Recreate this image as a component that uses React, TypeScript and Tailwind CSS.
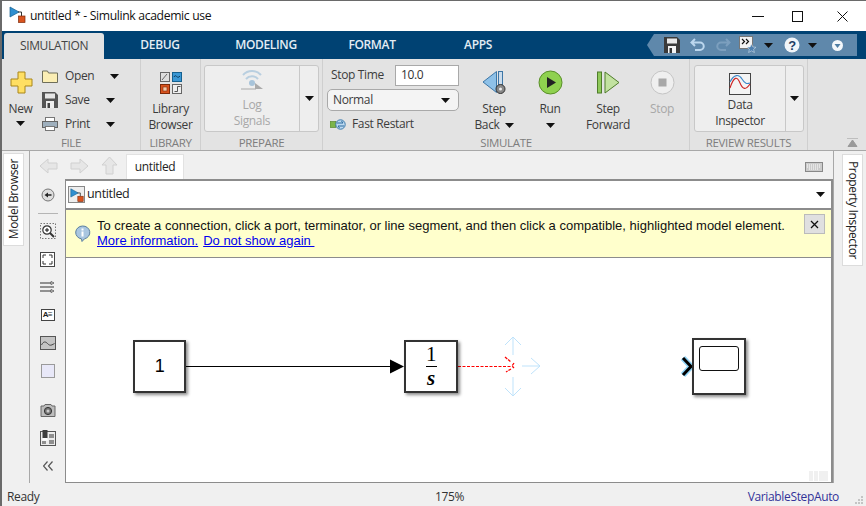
import type { ReactNode } from "react";

function Caret({ className = "" }: { className?: string }) {
  return (
    <svg width="9" height="5" viewBox="0 0 9 5" className={className}>
      <path d="M0 0h9L4.5 5z" fill="#111" />
    </svg>
  );
}

function ModelIcon({ size = 17 }: { size?: number }) {
  return (
    <svg width={size} height={size} viewBox="0 0 17 17">
      <path d="M1 1l9 5-9 5z" fill="#2f8fd0" stroke="#14608f" strokeWidth=".7" />
      <path d="M9 6h3.5v4" fill="none" stroke="#333" />
      <rect x="9.5" y="10" width="6.5" height="6.5" fill="#d9531e" stroke="#7c2a0a" strokeWidth=".7" />
    </svg>
  );
}

function QuickIcons() {
  return (
    <div className="flex items-center h-[22px] w-[210px] bg-[#5f88ab] [clip-path:polygon(0_50%,7px_0,100%_0,100%_100%,7px_100%)]">
      <svg width="16" height="16" viewBox="0 0 16 16" className="ml-[17px]">
        <path d="M0 0h13l3 3v13H0z" fill="#3a3a3a" />
        <rect x="3" y="1.5" width="10" height="5" fill="#e8e8e8" />
        <rect x="4" y="9" width="8" height="7" fill="#f4f4f4" />
        <rect x="5.5" y="11" width="2.5" height="5" fill="#333" />
      </svg>
      <svg width="16" height="14" viewBox="0 0 16 14" className="ml-[10px]">
        <path d="M5 1L1.5 4.5 5 8M2 4.5h8a3.7 3.7 0 0 1 0 7.5H5" fill="none" stroke="#bcd7ee" strokeWidth="2" />
      </svg>
      <svg width="16" height="14" viewBox="0 0 16 14" className="ml-[9px]">
        <path d="M11 1l3.5 3.5L11 8M14 4.5H6a3.7 3.7 0 0 0 0 7.5h5" fill="none" stroke="#7c9fbe" strokeWidth="2" />
      </svg>
      <svg width="18" height="18" viewBox="0 0 18 18" className="ml-[8px]">
        <rect x=".5" y=".5" width="13" height="12" fill="#f2f2f2" stroke="#777" />
        <path d="M3 3l2.5 2.5L3 8M7 3l2.5 2.5L7 8" fill="none" stroke="#111" strokeWidth="1.2" />
        <path d="M12.5 8l1.4 3 3.1.3-2.4 2 .8 3.2-2.9-1.7-2.9 1.7.8-3.2-2.4-2 3.1-.3z" fill="#4f81b0" stroke="#e4edf5" strokeWidth=".5" />
      </svg>
      <Caret className="ml-[7px]" />
      <svg width="16" height="16" viewBox="0 0 16 16" className="ml-[11px]">
        <circle cx="8" cy="8" r="7.5" fill="#f1f5f9" />
        <text x="8" y="12.5" textAnchor="middle" fontSize="13" fontWeight="700" fill="#1d3f66" fontFamily="Liberation Sans">?</text>
      </svg>
      <Caret className="ml-[8px]" />
      <svg width="11" height="11" viewBox="0 0 11 11" className="ml-[15px]">
        <circle cx="5.5" cy="5.5" r="5.5" fill="#f3f7fa" />
        <path d="M2.5 4h6l-3 4z" fill="#4f7da3" />
      </svg>
    </div>
  );
}

function MiniRow({ icon, label, caretClass }: { icon: ReactNode; label: string; caretClass: string }) {
  return (
    <div className="flex items-center h-[24px]">
      <div className="w-[16px] flex justify-center">{icon}</div>
      <span className="ml-[7px]">{label}</span>
      <Caret className={caretClass} />
    </div>
  );
}

function BigButton({ icon, lines, className, caret }: { icon: ReactNode; lines: ReactNode[]; className: string; caret?: boolean }) {
  return (
    <div className={`flex flex-col items-center ${className}`}>
      <div className="h-[37px] flex items-center justify-center mt-[5px]">{icon}</div>
      {lines.map((l, i) => (
        <div key={i} className="h-[16px] leading-[16px] flex items-center whitespace-nowrap">{l}</div>
      ))}
      {caret && <Caret className="mt-[6px]" />}
    </div>
  );
}

function Section({ label, className, children }: { label: string; className: string; children: ReactNode }) {
  return (
    <div className={`flex flex-col shrink-0 border-r border-[#cfcfcf] ${className}`}>
      <div className="h-[78px] flex">{children}</div>
      <div className="h-[14px] leading-[14px] text-center text-[11.5px] text-[#7d7d7d] whitespace-nowrap">{label}</div>
    </div>
  );
}

function SideTool({ children, className = "" }: { children: ReactNode; className?: string }) {
  return <div className={`flex items-center justify-center h-[28px] ${className}`}>{children}</div>;
}

function Toolbar() {
  return (
    <div className="flex flex-col items-center w-[35px] shrink-0 pt-[2px]">
      <SideTool>
        <svg width="14" height="14" viewBox="0 0 14 14">
          <circle cx="7" cy="7" r="6" fill="#ddd" stroke="#777" />
          <path d="M3.5 7L7 4.5v1.7h3.5v1.6H7v1.7z" fill="#222" />
        </svg>
      </SideTool>
      <div className="w-[20px] h-px bg-[#b5b5b5] mt-[4px] mb-[3px]" />
      <SideTool>
        <svg width="16" height="16" viewBox="0 0 16 16">
          <rect x=".5" y=".5" width="15" height="15" fill="none" stroke="#777" strokeDasharray="1.5 1.5" />
          <circle cx="7" cy="7" r="4.2" fill="#fff" stroke="#333" strokeWidth="1.2" />
          <path d="M5 7h4M7 5v4" stroke="#111" />
          <path d="M10 10l4 4" stroke="#333" strokeWidth="2" />
        </svg>
      </SideTool>
      <SideTool>
        <svg width="15" height="15" viewBox="0 0 15 15">
          <rect x=".5" y=".5" width="14" height="14" fill="#fff" stroke="#444" />
          <path d="M3 6V3h3M12 6V3H9M3 9v3h3M12 9v3H9" fill="none" stroke="#333" />
        </svg>
      </SideTool>
      <SideTool>
        <svg width="15" height="12" viewBox="0 0 15 12">
          <path d="M0 2h12M0 6h14M0 10h12" stroke="#333" />
          <path d="M11 .5l3 1.5-3 1.5zM11 8.5l3 1.5-3 1.5z" fill="#fff" stroke="#333" strokeWidth=".7" />
        </svg>
      </SideTool>
      <SideTool>
        <div className="w-[14px] h-[12px] border border-[#444] bg-white flex items-center justify-center text-[8px] leading-none font-bold font-['Liberation_Sans'] text-[#222]">A≡</div>
      </SideTool>
      <SideTool>
        <svg width="16" height="14" viewBox="0 0 16 14">
          <rect x=".5" y=".5" width="15" height="13" fill="#c4c4c4" stroke="#555" />
          <path d="M1.5 9c2-4 4-3.5 6-1.500s3 2.500 7 0" fill="none" stroke="#444" />
        </svg>
      </SideTool>
      <SideTool>
        <div className="w-[14px] h-[14px] bg-[#e8e8f8] border border-[#9a9a9a]" />
      </SideTool>
      <SideTool className="mt-[11px]">
        <svg width="16" height="13" viewBox="0 0 16 13">
          <path d="M1 2h3l1-1.500h6L12 2h3v10.500H1z" fill="#bdbdbd" stroke="#666" />
          <circle cx="8" cy="7" r="3.6" fill="#777" stroke="#333" />
          <circle cx="8" cy="7" r="1.5" fill="#ccc" />
        </svg>
      </SideTool>
      <SideTool>
        <svg width="16" height="16" viewBox="0 0 16 16">
          <rect x=".5" y="1.5" width="15" height="14" fill="#ececec" stroke="#555" />
          <rect x="2.5" y="0" width="5" height="8" fill="#3d3d3d" />
          <path d="M3 8h4l1 2.500H2z" fill="#fff" />
          <path d="M2 11h4v3H2zM9 4h5v4H9zM9 10h5v4H9z" fill="#8f8f8f" />
        </svg>
      </SideTool>
      <SideTool>
        <svg width="10" height="10" viewBox="0 0 10 10">
          <path d="M4.5.5L.5 5l4 4.500M9.500.5L5.500 5l4 4.500" fill="none" stroke="#555" strokeWidth="1.200" />
        </svg>
      </SideTool>
    </div>
  );
}

function Diagram() {
  return (
    <div className="flex-1 relative bg-white overflow-hidden">
      {/* lines use window coordinates through the viewBox */}
      <svg className="absolute inset-0" width="766" height="224" viewBox="66 258 766 224">
        <path d="M186 366.500H391" stroke="#000" />
        <path d="M390 359.500l14 7-14 7z" fill="#000" />
        <path d="M458 366.500H511" stroke="#f00" strokeWidth="1.200" strokeDasharray="3 1.500" />
        <path d="M505 357l6 5M511 369l-5 3M514 363l-2 3 2 2" fill="none" stroke="#f00" strokeWidth="1.300" strokeDasharray="3 1" />
        <g fill="none" stroke="#bfe3fb">
          <path d="M513 355V337M505 345l8-8 8 8" />
          <path d="M513 377V396M505 388l8 8 8-8" />
          <path d="M522 366H540M531 358l9 8-9 8" />
        </g>
        <path d="M683 358l8 8.500-8 8.500" fill="none" stroke="#8fd4f7" strokeWidth="6" />
        <path d="M683 358l8 8.500-8 8.500" fill="none" stroke="#000" strokeWidth="3" />
      </svg>
      <div className="absolute left-[67px] top-[82px] w-[53px] h-[53px] bg-white border-2 border-[#333] shadow-[2px_2px_3px_rgba(0,0,0,0.45)] flex items-center justify-center font-['Liberation_Sans'] text-[18px] text-black">1</div>
      <div className="absolute left-[338px] top-[82px] w-[54px] h-[53px] bg-white border-2 border-[#333] shadow-[2px_2px_3px_rgba(0,0,0,0.45)] flex flex-col items-center justify-center font-['Liberation_Serif'] text-[21px] leading-[21px] text-black">
        <span>1</span>
        <span className="w-[11px] h-px bg-black my-[1px]" />
        <span className="italic font-bold">s</span>
      </div>
      <div className="absolute left-[626px] top-[80px] w-[54px] h-[57px] bg-white border-2 border-[#333] shadow-[2px_2px_3px_rgba(0,0,0,0.45)]">
        <div className="ml-[5px] mt-[6px] w-[40px] h-[25px] border border-[#111] rounded-[3px]" />
      </div>
      <div className="absolute right-[3px] bottom-[1px] flex gap-[1px]">
        <div className="w-[4px] h-[10px] bg-[#f0f0f0]" />
        <div className="w-[4px] h-[10px] bg-[#f0f0f0]" />
        <div className="w-[9px] h-[10px] bg-[#f0f0f0]" />
      </div>
    </div>
  );
}

export default function App() {
  return (
    <div className="w-[866px] h-[506px] flex flex-col overflow-hidden bg-[#f0f0f0] border-l-2 border-t border-[#6a6a6a] font-['Open_Sans',sans-serif] text-[12px] tracking-[-0.35px] text-[#3c3c3c]">
      {/* title bar */}
      <div className="h-[30px] bg-white flex items-center shrink-0 text-[#111]">
        <div className="ml-[7px] mr-[4px] -mt-[3px]"><ModelIcon /></div>
        <span className="text-[12.2px]">untitled * - Simulink academic use</span>
        <div className="ml-auto flex items-center mr-[18px]">
          <div className="w-[12px] h-px bg-[#111] mr-[28px]" />
          <div className="w-[11px] h-[11px] border border-[#111] mr-[34px]" />
          <svg width="11" height="11" viewBox="0 0 11 11"><path d="M.5.5l10 10M10.500.5l-10 10" stroke="#111" /></svg>
        </div>
      </div>

      {/* tab strip */}
      <div className="h-[28px] bg-[#004273] flex shrink-0 text-[#e4edf4] font-semibold">
        <div className="ml-[2px] mt-[2px] w-[100px] bg-[#e3e3e3] rounded-t-[3px] text-[#444] font-normal flex items-center justify-center">SIMULATION</div>
        <div className="w-[106px] ml-[3px] flex items-center justify-center">DEBUG</div>
        <div className="w-[106px] flex items-center justify-center">MODELING</div>
        <div className="w-[106px] flex items-center justify-center">FORMAT</div>
        <div className="w-[106px] flex items-center justify-center">APPS</div>
        <div className="ml-auto mr-[9px] mt-[3px]"><QuickIcons /></div>
      </div>

      {/* toolstrip */}
      <div className="h-[92px] bg-[#e3e3e3] border-b border-[#a8a8a8] flex shrink-0 relative">
        <Section label="FILE" className="w-[139px]">
          <div className="w-[37px] flex flex-col items-center">
            <svg width="23" height="23" viewBox="0 0 23 23" className="mt-[12px] ml-[1px]">
              <path d="M8 1h7v7h7v7h-7v7H8v-7H1V8h7z" fill="#ffdf63" stroke="#a9861a" />
            </svg>
            <div className="mt-[7px] h-[16px] leading-[16px]">New</div>
            <Caret className="mt-[4px]" />
          </div>
          <div className="flex flex-col pt-[5px] pl-[3px]">
            <MiniRow label="Open" caretClass="ml-[16px]" icon={
              <svg width="16" height="13" viewBox="0 0 16 13"><path d="M.5 12.500V1h5l1 2h9v9.500z" fill="#fbeeb4" stroke="#6e6e5a" /></svg>
            } />
            <MiniRow label="Save" caretClass="ml-[16px]" icon={
              <svg width="16" height="16" viewBox="0 0 16 16"><path d="M0 0h13l3 3v13H0z" fill="#555" /><rect x="3" y="1.5" width="10" height="5" fill="#e6e6e6" /><rect x="4" y="9" width="8" height="7" fill="#eee" /><rect x="5.5" y="11" width="2.5" height="5" fill="#444" /></svg>
            } />
            <MiniRow label="Print" caretClass="ml-[16px]" icon={
              <svg width="16" height="14" viewBox="0 0 16 14"><rect x="3.5" y=".5" width="9" height="4" fill="#fff" stroke="#777" /><rect x=".5" y="4.5" width="15" height="6" fill="#9fb0be" stroke="#666" /><rect x="3.5" y="9.5" width="9" height="4" fill="#fff" stroke="#777" /></svg>
            } />
          </div>
        </Section>
        <Section label="LIBRARY" className="w-[60px]">
          <BigButton className="w-[60px]" lines={["Library", "Browser"]} icon={
            <svg width="22" height="22" viewBox="0 0 22 22">
              <rect x=".5" y=".5" width="9" height="9" fill="#ddd" stroke="#666" /><path d="M2 8l5-6" stroke="#666" />
              <rect x="12.5" y=".5" width="9" height="9" fill="#3a97d4" stroke="#14608f" /><path d="M14 5c2-4 3 3 6-1" fill="none" stroke="#0c3e60" />
              <rect x=".5" y="12.5" width="9" height="9" fill="#d9531e" stroke="#7c2a0a" /><rect x="3" y="15" width="4" height="4" fill="#f6c9a8" stroke="#7c2a0a" strokeWidth=".6" />
              <rect x="12.5" y="12.5" width="9" height="9" fill="#eee" stroke="#666" /><path d="M14.500 19.500h3v-5h3" fill="none" stroke="#555" />
            </svg>
          } />
        </Section>
        <Section label="PREPARE" className="w-[122px]">
          <div className="ml-[3px] mt-[6px] w-[115px] h-[67px] bg-[#eeeeee] border border-[#c8c8c8] rounded-[3px] flex text-[#a8a8a8]">
            <div className="w-[95px] flex flex-col items-center border-r border-[#c8c8c8]">
              <svg width="24" height="24" viewBox="0 0 24 24" className="mt-[2px]">
                <path d="M3 7a12 12 0 0 1 18 0M6 11a8 8 0 0 1 12 0" fill="none" stroke="#b9cfe0" strokeWidth="2" />
                <circle cx="12" cy="15" r="3" fill="#a8c4da" />
                <path d="M1 21h15" stroke="#aaa" /><path d="M15 15l8 6-8 0z" fill="#aaa" />
              </svg>
              <div className="h-[16px] leading-[16px] mt-[5px]">Log</div>
              <div className="h-[16px] leading-[16px]">Signals</div>
            </div>
            <div className="flex-1 flex items-center justify-center"><Caret className="-mt-[1px]" /></div>
          </div>
        </Section>
        <Section label="SIMULATE" className="w-[367px]">
          <div className="w-[136px] pl-[4px] flex flex-col shrink-0">
            <div className="flex items-center mt-[6px] h-[20px]">
              <span className="ml-[4px]">Stop Time</span>
              <div className="ml-auto w-[64px] h-[21px] bg-white border border-[#a9a9a9] text-[#333] pl-[5px] flex items-center">10.0</div>
            </div>
            <div className="mt-[4px] h-[22px] bg-[#f4f4f4] border border-[#a9a9a9] rounded-[5px] flex items-center pl-[5px] pr-[8px]">
              <span>Normal</span><Caret className="ml-auto" />
            </div>
            <div className="flex items-center mt-[3px] h-[20px] pl-[3px]">
              <svg width="16" height="13" viewBox="0 0 16 13">
                <rect x="0" y="3.5" width="6" height="6" fill="#7cb44a" stroke="#4a7a24" strokeWidth=".6" />
                <circle cx="10.5" cy="6.500" r="4.700" fill="#bcd9f0" stroke="#3a79ac" />
                <path d="M7 5h6l-1.500-2M14 8H8l1.500 2" fill="none" stroke="#2d6a9e" />
              </svg>
              <span className="ml-[6px]">Fast Restart</span>
            </div>
          </div>
          <div className="flex ml-[5px]">
            <BigButton className="w-[60px]" lines={[
              "Step",
              <span className="flex items-center">Back<Caret className="ml-[5px]" /></span>,
            ]} icon={
              <svg width="24" height="25" viewBox="0 0 24 25">
                <path d="M1 12L14.500 1.500v21z" fill="#8ec1e8" stroke="#3d76a6" />
                <rect x="16.500" y="1.500" width="4" height="15" fill="#cbdcec" stroke="#3d76a6" />
                <circle cx="18.500" cy="19" r="4.500" fill="#888" stroke="#333" /><circle cx="18.500" cy="19" r="1.500" fill="#eee" />
              </svg>
            } />
            <BigButton className="w-[52px]" caret lines={["Run"]} icon={
              <svg width="25" height="25" viewBox="0 0 25 25">
                <circle cx="12.5" cy="12.5" r="11.5" fill="#8fd14f" stroke="#5a8f2a" />
                <path d="M9 7l9 5.500L9 18z" fill="#222" />
              </svg>
            } />
            <BigButton className="w-[64px]" lines={["Step", "Forward"]} icon={
              <svg width="23" height="24" viewBox="0 0 23 24">
                <rect x=".5" y="1" width="4" height="21" fill="#8fc95a" stroke="#4f7d2a" />
                <path d="M8 1l14 10.500L8 22z" fill="#c2e2a0" stroke="#4f7d2a" />
              </svg>
            } />
            <BigButton className="w-[44px] text-[#a8a8a8]" lines={["Stop"]} icon={
              <svg width="25" height="25" viewBox="0 0 25 25">
                <circle cx="12.5" cy="12.5" r="11.5" fill="#efefef" stroke="#c4c4c4" />
                <rect x="8.5" y="8.5" width="8" height="8" fill="#a8a8a8" />
              </svg>
            } />
          </div>
        </Section>
        <Section label="REVIEW RESULTS" className="w-[118px]">
          <div className="ml-[4px] mt-[6px] w-[110px] h-[67px] bg-[#eeeeee] border border-[#c8c8c8] rounded-[3px] flex">
            <div className="w-[91px] flex flex-col items-center border-r border-[#c8c8c8]">
              <svg width="22" height="22" viewBox="0 0 22 22" className="mt-[7px]">
                <rect x=".5" y=".5" width="21" height="21" fill="#f4f4f4" stroke="#444" />
                <path d="M1 15C5 3 8 3 11 10s6 7 10 1" fill="none" stroke="#c22" strokeWidth="1.1" />
                <path d="M1 11C5 3 10 3 13 8s5 5 8 4" fill="none" stroke="#3a86c8" strokeWidth="1.1" transform="translate(0 -2)" />
              </svg>
              <div className="h-[16px] leading-[16px] mt-[2px]">Data</div>
              <div className="h-[16px] leading-[16px]">Inspector</div>
            </div>
            <div className="flex-1 flex items-center justify-center"><Caret className="-mt-[1px]" /></div>
          </div>
        </Section>
        <svg width="11" height="9" viewBox="0 0 11 9" className="absolute right-[8px] bottom-[3px]">
          <path d="M0 0h11M5.500 2L1 8.500h9z" stroke="#9a9a9a" fill="#9a9a9a" />
        </svg>
      </div>

      {/* main area */}
      <div className="flex-1 flex min-h-0">
        <div className="w-[28px] shrink-0 border-r border-[#a8a8a8] mb-[5px]">
          <div className="ml-[1px] mt-[2px] w-[21px] h-[93px] bg-white border border-[#dcdcdc] flex items-center justify-center">
            <span className="[writing-mode:vertical-rl] rotate-180 whitespace-nowrap text-[#222]">Model Browser</span>
          </div>
        </div>
        <div className="flex-1 flex flex-col min-w-0">
          <div className="h-[28px] flex items-end shrink-0 relative">
            <div className="flex items-center h-[27px] pl-[9px] gap-[12px]">
              <svg width="19" height="16" viewBox="0 0 19 16"><path d="M1 8l8-7v4h9v6H9v4z" fill="#e6e6e6" stroke="#d0d0d0" /></svg>
              <svg width="19" height="16" viewBox="0 0 19 16"><path d="M18 8l-8-7v4H1v6h9v4z" fill="#e6e6e6" stroke="#d0d0d0" /></svg>
              <svg width="17" height="19" viewBox="0 0 17 19"><path d="M8.500 1l7.500 8h-4v9H5V9H1z" fill="#e6e6e6" stroke="#d0d0d0" /></svg>
            </div>
            <div className="ml-[8px] w-[58px] h-[25px] bg-white border-t border-x border-[#e2e2e2] flex items-center justify-center text-[#222]">untitled</div>
            <svg width="18" height="10" viewBox="0 0 18 10" className="absolute right-[10px] top-[11px]">
              <rect x=".5" y=".5" width="17" height="9" fill="#ccc" stroke="#888" />
              <path d="M2 3h14M2 5h14M4 7h10" stroke="#fff" strokeDasharray="1 1" />
            </svg>
          </div>
          <div className="flex-1 flex min-h-0 mb-[5px]">
            <Toolbar />
            <div className="flex-1 flex flex-col border-t-2 border-r-2 border-l border-b border-[#8c8c8c] min-w-0 bg-white">
              <div className="h-[29px] flex items-center shrink-0 bg-white border-b-2 border-[#8c8c8c]">
                <div className="ml-[2px] w-[17px] h-[17px] border border-[#888] bg-[#eee] flex items-center justify-center"><ModelIcon size={14} /></div>
                <span className="ml-[2px] text-[#222] text-[12.5px]">untitled</span>
                <Caret className="ml-auto mr-[6px]" />
              </div>
              <div className="h-[48px] shrink-0 bg-[#ffffcc] border-b border-[#8c8c8c] flex font-['Liberation_Sans'] tracking-normal text-[13px] leading-[15px] text-[#111]">
                <svg width="17" height="17" viewBox="0 0 17 17" className="ml-[8px] mt-[15px] shrink-0">
                  <path d="M8.5 1a7 6.500 0 0 1 2 12.800L8 16.500l-.5-2.600A7 6.500 0 0 1 8.500 1z" fill="#a9c6e0" stroke="#5b7fa0" />
                  <rect x="7.5" y="6.500" width="2" height="5" fill="#fff" /><rect x="7.5" y="3.5" width="2" height="2" fill="#fff" />
                </svg>
                <div className="ml-[6px] mt-[8px] whitespace-nowrap">
                  <div>To create a connection, click a port, terminator, or line segment, and then click a compatible, highlighted model element.</div>
                  <div className="flex text-[#0000ee]">
                    <span className="underline">More information.</span>
                    <span className="underline ml-[5px]">Do not show again&nbsp;</span>
                  </div>
                </div>
                <div className="ml-auto mr-[6px] mt-[4px] w-[21px] h-[20px] bg-[#e0e0e0] border border-[#bbb] flex items-center justify-center shrink-0">
                  <svg width="9" height="9" viewBox="0 0 9 9"><path d="M1 1l7 7M8 1l-7 7" stroke="#111" strokeWidth="1.3" /></svg>
                </div>
              </div>
              <Diagram />
            </div>
          </div>
        </div>
        <div className="w-[33px] shrink-0 border-l border-[#a8a8a8] mb-[5px]">
          <div className="ml-[8px] mt-[3px] w-[21px] h-[112px] bg-white border border-[#dcdcdc] flex items-center justify-center">
            <span className="[writing-mode:vertical-rl] whitespace-nowrap text-[#222]">Property Inspector</span>
          </div>
        </div>
      </div>

      {/* status bar */}
      <div className="h-[18px] shrink-0 flex items-center relative text-[#333]">
        <span className="ml-[5px]">Ready</span>
        <span className="absolute left-[433px]">175%</span>
        <span className="ml-auto mr-[27px] text-[#333399]">VariableStepAuto</span>
        <svg width="10" height="10" viewBox="0 0 10 10" className="absolute right-[2px] bottom-[1px]">
          <path d="M7 1h2v2H7zM4 4h2v2H4zM7 4h2v2H7zM1 7h2v2H1zM4 7h2v2H4zM7 7h2v2H7z" fill="#c4c4c4" />
        </svg>
      </div>
    </div>
  );
}
